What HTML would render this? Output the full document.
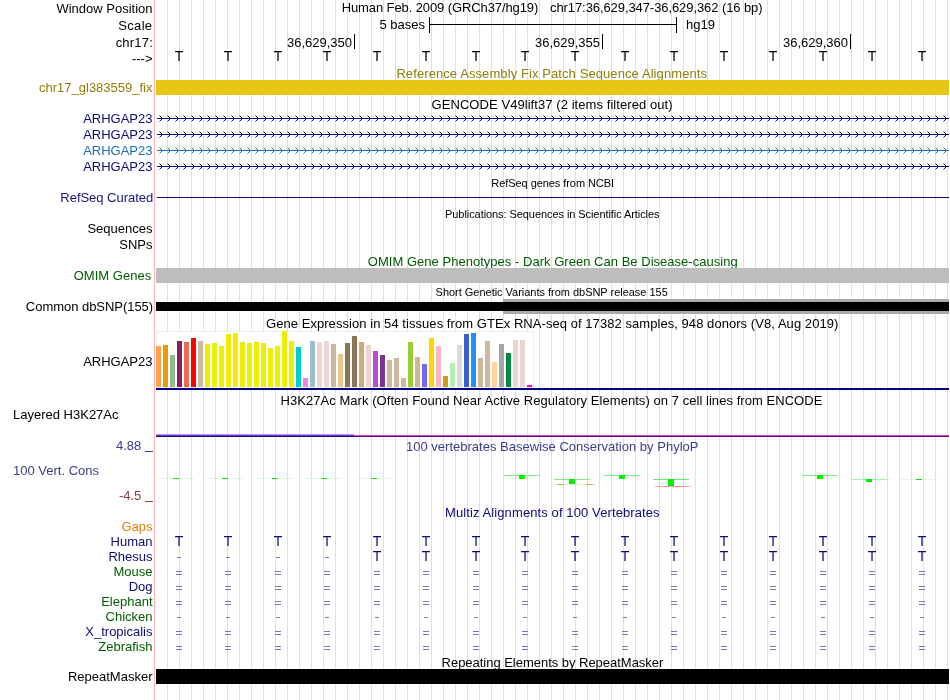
<!DOCTYPE html>
<html><head><meta charset="utf-8"><style>
html,body{margin:0;padding:0;background:#fff;}
svg{display:block;will-change:transform;}
text{font-family:"Liberation Sans", sans-serif;}
</style></head><body>
<svg width="950" height="700" viewBox="0 0 950 700" shape-rendering="crispEdges">
<rect width="950" height="700" fill="#fff"/>
<rect x="167" y="0" width="1" height="700" fill="#dcdcff"/>
<rect x="179" y="0" width="1" height="700" fill="#dcdcff"/>
<rect x="191" y="0" width="1" height="700" fill="#dcdcff"/>
<rect x="203" y="0" width="1" height="700" fill="#dcdcff"/>
<rect x="215" y="0" width="1" height="700" fill="#dcdcff"/>
<rect x="227" y="0" width="1" height="700" fill="#dcdcff"/>
<rect x="239" y="0" width="1" height="700" fill="#dcdcff"/>
<rect x="251" y="0" width="1" height="700" fill="#dcdcff"/>
<rect x="263" y="0" width="1" height="700" fill="#dcdcff"/>
<rect x="275" y="0" width="1" height="700" fill="#dcdcff"/>
<rect x="287" y="0" width="1" height="700" fill="#dcdcff"/>
<rect x="299" y="0" width="1" height="700" fill="#dcdcff"/>
<rect x="311" y="0" width="1" height="700" fill="#dcdcff"/>
<rect x="323" y="0" width="1" height="700" fill="#dcdcff"/>
<rect x="335" y="0" width="1" height="700" fill="#dcdcff"/>
<rect x="347" y="0" width="1" height="700" fill="#dcdcff"/>
<rect x="359" y="0" width="1" height="700" fill="#dcdcff"/>
<rect x="371" y="0" width="1" height="700" fill="#dcdcff"/>
<rect x="383" y="0" width="1" height="700" fill="#dcdcff"/>
<rect x="395" y="0" width="1" height="700" fill="#dcdcff"/>
<rect x="407" y="0" width="1" height="700" fill="#dcdcff"/>
<rect x="419" y="0" width="1" height="700" fill="#dcdcff"/>
<rect x="431" y="0" width="1" height="700" fill="#dcdcff"/>
<rect x="443" y="0" width="1" height="700" fill="#dcdcff"/>
<rect x="455" y="0" width="1" height="700" fill="#dcdcff"/>
<rect x="467" y="0" width="1" height="700" fill="#dcdcff"/>
<rect x="479" y="0" width="1" height="700" fill="#dcdcff"/>
<rect x="491" y="0" width="1" height="700" fill="#dcdcff"/>
<rect x="503" y="0" width="1" height="700" fill="#dcdcff"/>
<rect x="515" y="0" width="1" height="700" fill="#dcdcff"/>
<rect x="527" y="0" width="1" height="700" fill="#dcdcff"/>
<rect x="539" y="0" width="1" height="700" fill="#dcdcff"/>
<rect x="551" y="0" width="1" height="700" fill="#dcdcff"/>
<rect x="563" y="0" width="1" height="700" fill="#dcdcff"/>
<rect x="575" y="0" width="1" height="700" fill="#dcdcff"/>
<rect x="587" y="0" width="1" height="700" fill="#dcdcff"/>
<rect x="599" y="0" width="1" height="700" fill="#dcdcff"/>
<rect x="611" y="0" width="1" height="700" fill="#dcdcff"/>
<rect x="623" y="0" width="1" height="700" fill="#dcdcff"/>
<rect x="635" y="0" width="1" height="700" fill="#dcdcff"/>
<rect x="647" y="0" width="1" height="700" fill="#dcdcff"/>
<rect x="659" y="0" width="1" height="700" fill="#dcdcff"/>
<rect x="671" y="0" width="1" height="700" fill="#dcdcff"/>
<rect x="683" y="0" width="1" height="700" fill="#dcdcff"/>
<rect x="695" y="0" width="1" height="700" fill="#dcdcff"/>
<rect x="707" y="0" width="1" height="700" fill="#dcdcff"/>
<rect x="719" y="0" width="1" height="700" fill="#dcdcff"/>
<rect x="731" y="0" width="1" height="700" fill="#dcdcff"/>
<rect x="743" y="0" width="1" height="700" fill="#dcdcff"/>
<rect x="755" y="0" width="1" height="700" fill="#dcdcff"/>
<rect x="767" y="0" width="1" height="700" fill="#dcdcff"/>
<rect x="779" y="0" width="1" height="700" fill="#dcdcff"/>
<rect x="791" y="0" width="1" height="700" fill="#dcdcff"/>
<rect x="803" y="0" width="1" height="700" fill="#dcdcff"/>
<rect x="815" y="0" width="1" height="700" fill="#dcdcff"/>
<rect x="827" y="0" width="1" height="700" fill="#dcdcff"/>
<rect x="839" y="0" width="1" height="700" fill="#dcdcff"/>
<rect x="851" y="0" width="1" height="700" fill="#dcdcff"/>
<rect x="863" y="0" width="1" height="700" fill="#dcdcff"/>
<rect x="875" y="0" width="1" height="700" fill="#dcdcff"/>
<rect x="887" y="0" width="1" height="700" fill="#dcdcff"/>
<rect x="899" y="0" width="1" height="700" fill="#dcdcff"/>
<rect x="911" y="0" width="1" height="700" fill="#dcdcff"/>
<rect x="923" y="0" width="1" height="700" fill="#dcdcff"/>
<rect x="935" y="0" width="1" height="700" fill="#dcdcff"/>
<rect x="947" y="0" width="1" height="700" fill="#dcdcff"/>
<rect x="154" y="0" width="1" height="700" fill="#ffb4b4"/>
<text x="152.5" y="13" font-size="13" fill="#000" text-anchor="end">Window Position</text>
<text x="118.34" y="30" font-size="13" fill="#000" text-anchor="start" textLength="33.72" lengthAdjust="spacing">Scale</text>
<text x="115.68" y="47" font-size="13" fill="#000" text-anchor="start" textLength="37.13" lengthAdjust="spacing">chr17:</text>
<text x="152.5" y="63" font-size="13" fill="#000" text-anchor="end">---&gt;</text>
<text x="152.5" y="92" font-size="13" fill="#927d08" text-anchor="end">chr17_gl383559_fix</text>
<text x="152.5" y="123" font-size="13" fill="#0c0c78" text-anchor="end">ARHGAP23</text>
<text x="152.5" y="139" font-size="13" fill="#0c0c78" text-anchor="end">ARHGAP23</text>
<text x="152.5" y="155" font-size="13" fill="#1a6fb5" text-anchor="end">ARHGAP23</text>
<text x="152.5" y="171" font-size="13" fill="#0c0c78" text-anchor="end">ARHGAP23</text>
<text x="60.34" y="202" font-size="13" fill="#14147c" text-anchor="start" textLength="92.82" lengthAdjust="spacing">RefSeq Curated</text>
<text x="152.5" y="233" font-size="13" fill="#000" text-anchor="end">Sequences</text>
<text x="152.5" y="249" font-size="13" fill="#000" text-anchor="end">SNPs</text>
<text x="73.7" y="280" font-size="13" fill="#005c00" text-anchor="start" textLength="77.5" lengthAdjust="spacing">OMIM Genes</text>
<text x="25.86" y="311" font-size="13" fill="#000" text-anchor="start" textLength="127.29" lengthAdjust="spacing">Common dbSNP(155)</text>
<text x="152.5" y="366" font-size="13" fill="#000" text-anchor="end">ARHGAP23</text>
<text x="13" y="419" font-size="13" fill="#000" text-anchor="start">Layered H3K27Ac</text>
<text x="141.3" y="450" font-size="13" fill="#3c3c8c" text-anchor="end">4.88</text>
<rect x="145" y="451" width="8" height="1" fill="#3c3c8c"/>
<text x="13" y="475" font-size="13" fill="#3c3c8c" text-anchor="start">100 Vert. Cons</text>
<text x="141.3" y="500" font-size="13" fill="#8c3c3c" text-anchor="end">-4.5</text>
<rect x="145" y="501" width="8" height="1" fill="#8c3c3c"/>
<text x="152.5" y="531" font-size="13" fill="#e27f08" text-anchor="end">Gaps</text>
<text x="152.5" y="546" font-size="13" fill="#0c0c78" text-anchor="end">Human</text>
<text x="152.5" y="561" font-size="13" fill="#0c0c78" text-anchor="end">Rhesus</text>
<text x="152.5" y="576" font-size="13" fill="#005c00" text-anchor="end">Mouse</text>
<text x="152.5" y="591" font-size="13" fill="#0c0c78" text-anchor="end">Dog</text>
<text x="152.5" y="606" font-size="13" fill="#005c00" text-anchor="end">Elephant</text>
<text x="152.5" y="621" font-size="13" fill="#005c00" text-anchor="end">Chicken</text>
<text x="152.5" y="636" font-size="13" fill="#0c0c78" text-anchor="end">X_tropicalis</text>
<text x="152.5" y="651" font-size="13" fill="#005c00" text-anchor="end">Zebrafish</text>
<text x="152.5" y="681" font-size="13" fill="#000" text-anchor="end">RepeatMasker</text>
<text x="341.63" y="12" font-size="13" fill="#000" text-anchor="start" textLength="196.64" lengthAdjust="spacing">Human Feb. 2009 (GRCh37/hg19)</text>
<text x="550.01" y="12" font-size="13" fill="#000" text-anchor="start" textLength="212.59" lengthAdjust="spacing">chr17:36,629,347-36,629,362 (16 bp)</text>
<text x="425" y="29" font-size="13" fill="#000" text-anchor="end">5 bases</text>
<rect x="429" y="17" width="1" height="16" fill="#000"/>
<rect x="676" y="17" width="1" height="16" fill="#000"/>
<rect x="429" y="24" width="248" height="1" fill="#000"/>
<text x="686" y="29" font-size="13" fill="#000" text-anchor="start">hg19</text>
<rect x="354" y="34" width="1" height="15" fill="#000"/>
<text x="352" y="47" font-size="13" fill="#000" text-anchor="end">36,629,350</text>
<rect x="602" y="34" width="1" height="15" fill="#000"/>
<text x="600" y="47" font-size="13" fill="#000" text-anchor="end">36,629,355</text>
<rect x="850" y="34" width="1" height="15" fill="#000"/>
<text x="848" y="47" font-size="13" fill="#000" text-anchor="end">36,629,360</text>
<text x="179.00" y="61" font-size="14" fill="#000" text-anchor="middle">T</text>
<text x="228.00" y="61" font-size="14" fill="#000" text-anchor="middle">T</text>
<text x="278.00" y="61" font-size="14" fill="#000" text-anchor="middle">T</text>
<text x="327.00" y="61" font-size="14" fill="#000" text-anchor="middle">T</text>
<text x="377.00" y="61" font-size="14" fill="#000" text-anchor="middle">T</text>
<text x="426.00" y="61" font-size="14" fill="#000" text-anchor="middle">T</text>
<text x="476.00" y="61" font-size="14" fill="#000" text-anchor="middle">T</text>
<text x="525.00" y="61" font-size="14" fill="#000" text-anchor="middle">T</text>
<text x="575.00" y="61" font-size="14" fill="#000" text-anchor="middle">T</text>
<text x="625.00" y="61" font-size="14" fill="#000" text-anchor="middle">T</text>
<text x="674.00" y="61" font-size="14" fill="#000" text-anchor="middle">T</text>
<text x="724.00" y="61" font-size="14" fill="#000" text-anchor="middle">T</text>
<text x="773.00" y="61" font-size="14" fill="#000" text-anchor="middle">T</text>
<text x="823.00" y="61" font-size="14" fill="#000" text-anchor="middle">T</text>
<text x="872.00" y="61" font-size="14" fill="#000" text-anchor="middle">T</text>
<text x="922.00" y="61" font-size="14" fill="#000" text-anchor="middle">T</text>
<text x="396.39" y="78" font-size="13" fill="#927d08" text-anchor="start" textLength="310.62" lengthAdjust="spacing">Reference Assembly Fix Patch Sequence Alignments</text>
<rect x="156" y="80" width="793" height="15" fill="#e6c814"/>
<text x="431.54" y="109" font-size="13" fill="#000" text-anchor="start" textLength="241.02" lengthAdjust="spacing">GENCODE V49lift37 (2 items filtered out)</text>
<rect x="157" y="118" width="792" height="1" fill="#0c0c78"/>
<path d="M160,116h1v1h-1z M161,117h1v3h-1z M160,120h1v1h-1z M168,116h1v1h-1z M169,117h1v3h-1z M168,120h1v1h-1z M176,116h1v1h-1z M177,117h1v3h-1z M176,120h1v1h-1z M184,116h1v1h-1z M185,117h1v3h-1z M184,120h1v1h-1z M192,116h1v1h-1z M193,117h1v3h-1z M192,120h1v1h-1z M200,116h1v1h-1z M201,117h1v3h-1z M200,120h1v1h-1z M208,116h1v1h-1z M209,117h1v3h-1z M208,120h1v1h-1z M216,116h1v1h-1z M217,117h1v3h-1z M216,120h1v1h-1z M224,116h1v1h-1z M225,117h1v3h-1z M224,120h1v1h-1z M232,116h1v1h-1z M233,117h1v3h-1z M232,120h1v1h-1z M240,116h1v1h-1z M241,117h1v3h-1z M240,120h1v1h-1z M248,116h1v1h-1z M249,117h1v3h-1z M248,120h1v1h-1z M256,116h1v1h-1z M257,117h1v3h-1z M256,120h1v1h-1z M264,116h1v1h-1z M265,117h1v3h-1z M264,120h1v1h-1z M272,116h1v1h-1z M273,117h1v3h-1z M272,120h1v1h-1z M280,116h1v1h-1z M281,117h1v3h-1z M280,120h1v1h-1z M288,116h1v1h-1z M289,117h1v3h-1z M288,120h1v1h-1z M296,116h1v1h-1z M297,117h1v3h-1z M296,120h1v1h-1z M304,116h1v1h-1z M305,117h1v3h-1z M304,120h1v1h-1z M312,116h1v1h-1z M313,117h1v3h-1z M312,120h1v1h-1z M320,116h1v1h-1z M321,117h1v3h-1z M320,120h1v1h-1z M328,116h1v1h-1z M329,117h1v3h-1z M328,120h1v1h-1z M336,116h1v1h-1z M337,117h1v3h-1z M336,120h1v1h-1z M344,116h1v1h-1z M345,117h1v3h-1z M344,120h1v1h-1z M352,116h1v1h-1z M353,117h1v3h-1z M352,120h1v1h-1z M360,116h1v1h-1z M361,117h1v3h-1z M360,120h1v1h-1z M368,116h1v1h-1z M369,117h1v3h-1z M368,120h1v1h-1z M376,116h1v1h-1z M377,117h1v3h-1z M376,120h1v1h-1z M384,116h1v1h-1z M385,117h1v3h-1z M384,120h1v1h-1z M392,116h1v1h-1z M393,117h1v3h-1z M392,120h1v1h-1z M400,116h1v1h-1z M401,117h1v3h-1z M400,120h1v1h-1z M408,116h1v1h-1z M409,117h1v3h-1z M408,120h1v1h-1z M416,116h1v1h-1z M417,117h1v3h-1z M416,120h1v1h-1z M424,116h1v1h-1z M425,117h1v3h-1z M424,120h1v1h-1z M432,116h1v1h-1z M433,117h1v3h-1z M432,120h1v1h-1z M440,116h1v1h-1z M441,117h1v3h-1z M440,120h1v1h-1z M448,116h1v1h-1z M449,117h1v3h-1z M448,120h1v1h-1z M456,116h1v1h-1z M457,117h1v3h-1z M456,120h1v1h-1z M464,116h1v1h-1z M465,117h1v3h-1z M464,120h1v1h-1z M472,116h1v1h-1z M473,117h1v3h-1z M472,120h1v1h-1z M480,116h1v1h-1z M481,117h1v3h-1z M480,120h1v1h-1z M488,116h1v1h-1z M489,117h1v3h-1z M488,120h1v1h-1z M496,116h1v1h-1z M497,117h1v3h-1z M496,120h1v1h-1z M504,116h1v1h-1z M505,117h1v3h-1z M504,120h1v1h-1z M512,116h1v1h-1z M513,117h1v3h-1z M512,120h1v1h-1z M520,116h1v1h-1z M521,117h1v3h-1z M520,120h1v1h-1z M528,116h1v1h-1z M529,117h1v3h-1z M528,120h1v1h-1z M536,116h1v1h-1z M537,117h1v3h-1z M536,120h1v1h-1z M544,116h1v1h-1z M545,117h1v3h-1z M544,120h1v1h-1z M552,116h1v1h-1z M553,117h1v3h-1z M552,120h1v1h-1z M560,116h1v1h-1z M561,117h1v3h-1z M560,120h1v1h-1z M568,116h1v1h-1z M569,117h1v3h-1z M568,120h1v1h-1z M576,116h1v1h-1z M577,117h1v3h-1z M576,120h1v1h-1z M584,116h1v1h-1z M585,117h1v3h-1z M584,120h1v1h-1z M592,116h1v1h-1z M593,117h1v3h-1z M592,120h1v1h-1z M600,116h1v1h-1z M601,117h1v3h-1z M600,120h1v1h-1z M608,116h1v1h-1z M609,117h1v3h-1z M608,120h1v1h-1z M616,116h1v1h-1z M617,117h1v3h-1z M616,120h1v1h-1z M624,116h1v1h-1z M625,117h1v3h-1z M624,120h1v1h-1z M632,116h1v1h-1z M633,117h1v3h-1z M632,120h1v1h-1z M640,116h1v1h-1z M641,117h1v3h-1z M640,120h1v1h-1z M648,116h1v1h-1z M649,117h1v3h-1z M648,120h1v1h-1z M656,116h1v1h-1z M657,117h1v3h-1z M656,120h1v1h-1z M664,116h1v1h-1z M665,117h1v3h-1z M664,120h1v1h-1z M672,116h1v1h-1z M673,117h1v3h-1z M672,120h1v1h-1z M680,116h1v1h-1z M681,117h1v3h-1z M680,120h1v1h-1z M688,116h1v1h-1z M689,117h1v3h-1z M688,120h1v1h-1z M696,116h1v1h-1z M697,117h1v3h-1z M696,120h1v1h-1z M704,116h1v1h-1z M705,117h1v3h-1z M704,120h1v1h-1z M712,116h1v1h-1z M713,117h1v3h-1z M712,120h1v1h-1z M720,116h1v1h-1z M721,117h1v3h-1z M720,120h1v1h-1z M728,116h1v1h-1z M729,117h1v3h-1z M728,120h1v1h-1z M736,116h1v1h-1z M737,117h1v3h-1z M736,120h1v1h-1z M744,116h1v1h-1z M745,117h1v3h-1z M744,120h1v1h-1z M752,116h1v1h-1z M753,117h1v3h-1z M752,120h1v1h-1z M760,116h1v1h-1z M761,117h1v3h-1z M760,120h1v1h-1z M768,116h1v1h-1z M769,117h1v3h-1z M768,120h1v1h-1z M776,116h1v1h-1z M777,117h1v3h-1z M776,120h1v1h-1z M784,116h1v1h-1z M785,117h1v3h-1z M784,120h1v1h-1z M792,116h1v1h-1z M793,117h1v3h-1z M792,120h1v1h-1z M800,116h1v1h-1z M801,117h1v3h-1z M800,120h1v1h-1z M808,116h1v1h-1z M809,117h1v3h-1z M808,120h1v1h-1z M816,116h1v1h-1z M817,117h1v3h-1z M816,120h1v1h-1z M824,116h1v1h-1z M825,117h1v3h-1z M824,120h1v1h-1z M832,116h1v1h-1z M833,117h1v3h-1z M832,120h1v1h-1z M840,116h1v1h-1z M841,117h1v3h-1z M840,120h1v1h-1z M848,116h1v1h-1z M849,117h1v3h-1z M848,120h1v1h-1z M856,116h1v1h-1z M857,117h1v3h-1z M856,120h1v1h-1z M864,116h1v1h-1z M865,117h1v3h-1z M864,120h1v1h-1z M872,116h1v1h-1z M873,117h1v3h-1z M872,120h1v1h-1z M880,116h1v1h-1z M881,117h1v3h-1z M880,120h1v1h-1z M888,116h1v1h-1z M889,117h1v3h-1z M888,120h1v1h-1z M896,116h1v1h-1z M897,117h1v3h-1z M896,120h1v1h-1z M904,116h1v1h-1z M905,117h1v3h-1z M904,120h1v1h-1z M912,116h1v1h-1z M913,117h1v3h-1z M912,120h1v1h-1z M920,116h1v1h-1z M921,117h1v3h-1z M920,120h1v1h-1z M928,116h1v1h-1z M929,117h1v3h-1z M928,120h1v1h-1z M936,116h1v1h-1z M937,117h1v3h-1z M936,120h1v1h-1z M944,116h1v1h-1z M945,117h1v3h-1z M944,120h1v1h-1z" fill="#0c0c78"/>
<path d="M159,115h1v1h-1z M159,121h1v1h-1z M167,115h1v1h-1z M167,121h1v1h-1z M175,115h1v1h-1z M175,121h1v1h-1z M183,115h1v1h-1z M183,121h1v1h-1z M191,115h1v1h-1z M191,121h1v1h-1z M199,115h1v1h-1z M199,121h1v1h-1z M207,115h1v1h-1z M207,121h1v1h-1z M215,115h1v1h-1z M215,121h1v1h-1z M223,115h1v1h-1z M223,121h1v1h-1z M231,115h1v1h-1z M231,121h1v1h-1z M239,115h1v1h-1z M239,121h1v1h-1z M247,115h1v1h-1z M247,121h1v1h-1z M255,115h1v1h-1z M255,121h1v1h-1z M263,115h1v1h-1z M263,121h1v1h-1z M271,115h1v1h-1z M271,121h1v1h-1z M279,115h1v1h-1z M279,121h1v1h-1z M287,115h1v1h-1z M287,121h1v1h-1z M295,115h1v1h-1z M295,121h1v1h-1z M303,115h1v1h-1z M303,121h1v1h-1z M311,115h1v1h-1z M311,121h1v1h-1z M319,115h1v1h-1z M319,121h1v1h-1z M327,115h1v1h-1z M327,121h1v1h-1z M335,115h1v1h-1z M335,121h1v1h-1z M343,115h1v1h-1z M343,121h1v1h-1z M351,115h1v1h-1z M351,121h1v1h-1z M359,115h1v1h-1z M359,121h1v1h-1z M367,115h1v1h-1z M367,121h1v1h-1z M375,115h1v1h-1z M375,121h1v1h-1z M383,115h1v1h-1z M383,121h1v1h-1z M391,115h1v1h-1z M391,121h1v1h-1z M399,115h1v1h-1z M399,121h1v1h-1z M407,115h1v1h-1z M407,121h1v1h-1z M415,115h1v1h-1z M415,121h1v1h-1z M423,115h1v1h-1z M423,121h1v1h-1z M431,115h1v1h-1z M431,121h1v1h-1z M439,115h1v1h-1z M439,121h1v1h-1z M447,115h1v1h-1z M447,121h1v1h-1z M455,115h1v1h-1z M455,121h1v1h-1z M463,115h1v1h-1z M463,121h1v1h-1z M471,115h1v1h-1z M471,121h1v1h-1z M479,115h1v1h-1z M479,121h1v1h-1z M487,115h1v1h-1z M487,121h1v1h-1z M495,115h1v1h-1z M495,121h1v1h-1z M503,115h1v1h-1z M503,121h1v1h-1z M511,115h1v1h-1z M511,121h1v1h-1z M519,115h1v1h-1z M519,121h1v1h-1z M527,115h1v1h-1z M527,121h1v1h-1z M535,115h1v1h-1z M535,121h1v1h-1z M543,115h1v1h-1z M543,121h1v1h-1z M551,115h1v1h-1z M551,121h1v1h-1z M559,115h1v1h-1z M559,121h1v1h-1z M567,115h1v1h-1z M567,121h1v1h-1z M575,115h1v1h-1z M575,121h1v1h-1z M583,115h1v1h-1z M583,121h1v1h-1z M591,115h1v1h-1z M591,121h1v1h-1z M599,115h1v1h-1z M599,121h1v1h-1z M607,115h1v1h-1z M607,121h1v1h-1z M615,115h1v1h-1z M615,121h1v1h-1z M623,115h1v1h-1z M623,121h1v1h-1z M631,115h1v1h-1z M631,121h1v1h-1z M639,115h1v1h-1z M639,121h1v1h-1z M647,115h1v1h-1z M647,121h1v1h-1z M655,115h1v1h-1z M655,121h1v1h-1z M663,115h1v1h-1z M663,121h1v1h-1z M671,115h1v1h-1z M671,121h1v1h-1z M679,115h1v1h-1z M679,121h1v1h-1z M687,115h1v1h-1z M687,121h1v1h-1z M695,115h1v1h-1z M695,121h1v1h-1z M703,115h1v1h-1z M703,121h1v1h-1z M711,115h1v1h-1z M711,121h1v1h-1z M719,115h1v1h-1z M719,121h1v1h-1z M727,115h1v1h-1z M727,121h1v1h-1z M735,115h1v1h-1z M735,121h1v1h-1z M743,115h1v1h-1z M743,121h1v1h-1z M751,115h1v1h-1z M751,121h1v1h-1z M759,115h1v1h-1z M759,121h1v1h-1z M767,115h1v1h-1z M767,121h1v1h-1z M775,115h1v1h-1z M775,121h1v1h-1z M783,115h1v1h-1z M783,121h1v1h-1z M791,115h1v1h-1z M791,121h1v1h-1z M799,115h1v1h-1z M799,121h1v1h-1z M807,115h1v1h-1z M807,121h1v1h-1z M815,115h1v1h-1z M815,121h1v1h-1z M823,115h1v1h-1z M823,121h1v1h-1z M831,115h1v1h-1z M831,121h1v1h-1z M839,115h1v1h-1z M839,121h1v1h-1z M847,115h1v1h-1z M847,121h1v1h-1z M855,115h1v1h-1z M855,121h1v1h-1z M863,115h1v1h-1z M863,121h1v1h-1z M871,115h1v1h-1z M871,121h1v1h-1z M879,115h1v1h-1z M879,121h1v1h-1z M887,115h1v1h-1z M887,121h1v1h-1z M895,115h1v1h-1z M895,121h1v1h-1z M903,115h1v1h-1z M903,121h1v1h-1z M911,115h1v1h-1z M911,121h1v1h-1z M919,115h1v1h-1z M919,121h1v1h-1z M927,115h1v1h-1z M927,121h1v1h-1z M935,115h1v1h-1z M935,121h1v1h-1z M943,115h1v1h-1z M943,121h1v1h-1z" fill="#9292c2"/>
<rect x="157" y="134" width="792" height="1" fill="#0c0c78"/>
<path d="M160,132h1v1h-1z M161,133h1v3h-1z M160,136h1v1h-1z M168,132h1v1h-1z M169,133h1v3h-1z M168,136h1v1h-1z M176,132h1v1h-1z M177,133h1v3h-1z M176,136h1v1h-1z M184,132h1v1h-1z M185,133h1v3h-1z M184,136h1v1h-1z M192,132h1v1h-1z M193,133h1v3h-1z M192,136h1v1h-1z M200,132h1v1h-1z M201,133h1v3h-1z M200,136h1v1h-1z M208,132h1v1h-1z M209,133h1v3h-1z M208,136h1v1h-1z M216,132h1v1h-1z M217,133h1v3h-1z M216,136h1v1h-1z M224,132h1v1h-1z M225,133h1v3h-1z M224,136h1v1h-1z M232,132h1v1h-1z M233,133h1v3h-1z M232,136h1v1h-1z M240,132h1v1h-1z M241,133h1v3h-1z M240,136h1v1h-1z M248,132h1v1h-1z M249,133h1v3h-1z M248,136h1v1h-1z M256,132h1v1h-1z M257,133h1v3h-1z M256,136h1v1h-1z M264,132h1v1h-1z M265,133h1v3h-1z M264,136h1v1h-1z M272,132h1v1h-1z M273,133h1v3h-1z M272,136h1v1h-1z M280,132h1v1h-1z M281,133h1v3h-1z M280,136h1v1h-1z M288,132h1v1h-1z M289,133h1v3h-1z M288,136h1v1h-1z M296,132h1v1h-1z M297,133h1v3h-1z M296,136h1v1h-1z M304,132h1v1h-1z M305,133h1v3h-1z M304,136h1v1h-1z M312,132h1v1h-1z M313,133h1v3h-1z M312,136h1v1h-1z M320,132h1v1h-1z M321,133h1v3h-1z M320,136h1v1h-1z M328,132h1v1h-1z M329,133h1v3h-1z M328,136h1v1h-1z M336,132h1v1h-1z M337,133h1v3h-1z M336,136h1v1h-1z M344,132h1v1h-1z M345,133h1v3h-1z M344,136h1v1h-1z M352,132h1v1h-1z M353,133h1v3h-1z M352,136h1v1h-1z M360,132h1v1h-1z M361,133h1v3h-1z M360,136h1v1h-1z M368,132h1v1h-1z M369,133h1v3h-1z M368,136h1v1h-1z M376,132h1v1h-1z M377,133h1v3h-1z M376,136h1v1h-1z M384,132h1v1h-1z M385,133h1v3h-1z M384,136h1v1h-1z M392,132h1v1h-1z M393,133h1v3h-1z M392,136h1v1h-1z M400,132h1v1h-1z M401,133h1v3h-1z M400,136h1v1h-1z M408,132h1v1h-1z M409,133h1v3h-1z M408,136h1v1h-1z M416,132h1v1h-1z M417,133h1v3h-1z M416,136h1v1h-1z M424,132h1v1h-1z M425,133h1v3h-1z M424,136h1v1h-1z M432,132h1v1h-1z M433,133h1v3h-1z M432,136h1v1h-1z M440,132h1v1h-1z M441,133h1v3h-1z M440,136h1v1h-1z M448,132h1v1h-1z M449,133h1v3h-1z M448,136h1v1h-1z M456,132h1v1h-1z M457,133h1v3h-1z M456,136h1v1h-1z M464,132h1v1h-1z M465,133h1v3h-1z M464,136h1v1h-1z M472,132h1v1h-1z M473,133h1v3h-1z M472,136h1v1h-1z M480,132h1v1h-1z M481,133h1v3h-1z M480,136h1v1h-1z M488,132h1v1h-1z M489,133h1v3h-1z M488,136h1v1h-1z M496,132h1v1h-1z M497,133h1v3h-1z M496,136h1v1h-1z M504,132h1v1h-1z M505,133h1v3h-1z M504,136h1v1h-1z M512,132h1v1h-1z M513,133h1v3h-1z M512,136h1v1h-1z M520,132h1v1h-1z M521,133h1v3h-1z M520,136h1v1h-1z M528,132h1v1h-1z M529,133h1v3h-1z M528,136h1v1h-1z M536,132h1v1h-1z M537,133h1v3h-1z M536,136h1v1h-1z M544,132h1v1h-1z M545,133h1v3h-1z M544,136h1v1h-1z M552,132h1v1h-1z M553,133h1v3h-1z M552,136h1v1h-1z M560,132h1v1h-1z M561,133h1v3h-1z M560,136h1v1h-1z M568,132h1v1h-1z M569,133h1v3h-1z M568,136h1v1h-1z M576,132h1v1h-1z M577,133h1v3h-1z M576,136h1v1h-1z M584,132h1v1h-1z M585,133h1v3h-1z M584,136h1v1h-1z M592,132h1v1h-1z M593,133h1v3h-1z M592,136h1v1h-1z M600,132h1v1h-1z M601,133h1v3h-1z M600,136h1v1h-1z M608,132h1v1h-1z M609,133h1v3h-1z M608,136h1v1h-1z M616,132h1v1h-1z M617,133h1v3h-1z M616,136h1v1h-1z M624,132h1v1h-1z M625,133h1v3h-1z M624,136h1v1h-1z M632,132h1v1h-1z M633,133h1v3h-1z M632,136h1v1h-1z M640,132h1v1h-1z M641,133h1v3h-1z M640,136h1v1h-1z M648,132h1v1h-1z M649,133h1v3h-1z M648,136h1v1h-1z M656,132h1v1h-1z M657,133h1v3h-1z M656,136h1v1h-1z M664,132h1v1h-1z M665,133h1v3h-1z M664,136h1v1h-1z M672,132h1v1h-1z M673,133h1v3h-1z M672,136h1v1h-1z M680,132h1v1h-1z M681,133h1v3h-1z M680,136h1v1h-1z M688,132h1v1h-1z M689,133h1v3h-1z M688,136h1v1h-1z M696,132h1v1h-1z M697,133h1v3h-1z M696,136h1v1h-1z M704,132h1v1h-1z M705,133h1v3h-1z M704,136h1v1h-1z M712,132h1v1h-1z M713,133h1v3h-1z M712,136h1v1h-1z M720,132h1v1h-1z M721,133h1v3h-1z M720,136h1v1h-1z M728,132h1v1h-1z M729,133h1v3h-1z M728,136h1v1h-1z M736,132h1v1h-1z M737,133h1v3h-1z M736,136h1v1h-1z M744,132h1v1h-1z M745,133h1v3h-1z M744,136h1v1h-1z M752,132h1v1h-1z M753,133h1v3h-1z M752,136h1v1h-1z M760,132h1v1h-1z M761,133h1v3h-1z M760,136h1v1h-1z M768,132h1v1h-1z M769,133h1v3h-1z M768,136h1v1h-1z M776,132h1v1h-1z M777,133h1v3h-1z M776,136h1v1h-1z M784,132h1v1h-1z M785,133h1v3h-1z M784,136h1v1h-1z M792,132h1v1h-1z M793,133h1v3h-1z M792,136h1v1h-1z M800,132h1v1h-1z M801,133h1v3h-1z M800,136h1v1h-1z M808,132h1v1h-1z M809,133h1v3h-1z M808,136h1v1h-1z M816,132h1v1h-1z M817,133h1v3h-1z M816,136h1v1h-1z M824,132h1v1h-1z M825,133h1v3h-1z M824,136h1v1h-1z M832,132h1v1h-1z M833,133h1v3h-1z M832,136h1v1h-1z M840,132h1v1h-1z M841,133h1v3h-1z M840,136h1v1h-1z M848,132h1v1h-1z M849,133h1v3h-1z M848,136h1v1h-1z M856,132h1v1h-1z M857,133h1v3h-1z M856,136h1v1h-1z M864,132h1v1h-1z M865,133h1v3h-1z M864,136h1v1h-1z M872,132h1v1h-1z M873,133h1v3h-1z M872,136h1v1h-1z M880,132h1v1h-1z M881,133h1v3h-1z M880,136h1v1h-1z M888,132h1v1h-1z M889,133h1v3h-1z M888,136h1v1h-1z M896,132h1v1h-1z M897,133h1v3h-1z M896,136h1v1h-1z M904,132h1v1h-1z M905,133h1v3h-1z M904,136h1v1h-1z M912,132h1v1h-1z M913,133h1v3h-1z M912,136h1v1h-1z M920,132h1v1h-1z M921,133h1v3h-1z M920,136h1v1h-1z M928,132h1v1h-1z M929,133h1v3h-1z M928,136h1v1h-1z M936,132h1v1h-1z M937,133h1v3h-1z M936,136h1v1h-1z M944,132h1v1h-1z M945,133h1v3h-1z M944,136h1v1h-1z" fill="#0c0c78"/>
<path d="M159,131h1v1h-1z M159,137h1v1h-1z M167,131h1v1h-1z M167,137h1v1h-1z M175,131h1v1h-1z M175,137h1v1h-1z M183,131h1v1h-1z M183,137h1v1h-1z M191,131h1v1h-1z M191,137h1v1h-1z M199,131h1v1h-1z M199,137h1v1h-1z M207,131h1v1h-1z M207,137h1v1h-1z M215,131h1v1h-1z M215,137h1v1h-1z M223,131h1v1h-1z M223,137h1v1h-1z M231,131h1v1h-1z M231,137h1v1h-1z M239,131h1v1h-1z M239,137h1v1h-1z M247,131h1v1h-1z M247,137h1v1h-1z M255,131h1v1h-1z M255,137h1v1h-1z M263,131h1v1h-1z M263,137h1v1h-1z M271,131h1v1h-1z M271,137h1v1h-1z M279,131h1v1h-1z M279,137h1v1h-1z M287,131h1v1h-1z M287,137h1v1h-1z M295,131h1v1h-1z M295,137h1v1h-1z M303,131h1v1h-1z M303,137h1v1h-1z M311,131h1v1h-1z M311,137h1v1h-1z M319,131h1v1h-1z M319,137h1v1h-1z M327,131h1v1h-1z M327,137h1v1h-1z M335,131h1v1h-1z M335,137h1v1h-1z M343,131h1v1h-1z M343,137h1v1h-1z M351,131h1v1h-1z M351,137h1v1h-1z M359,131h1v1h-1z M359,137h1v1h-1z M367,131h1v1h-1z M367,137h1v1h-1z M375,131h1v1h-1z M375,137h1v1h-1z M383,131h1v1h-1z M383,137h1v1h-1z M391,131h1v1h-1z M391,137h1v1h-1z M399,131h1v1h-1z M399,137h1v1h-1z M407,131h1v1h-1z M407,137h1v1h-1z M415,131h1v1h-1z M415,137h1v1h-1z M423,131h1v1h-1z M423,137h1v1h-1z M431,131h1v1h-1z M431,137h1v1h-1z M439,131h1v1h-1z M439,137h1v1h-1z M447,131h1v1h-1z M447,137h1v1h-1z M455,131h1v1h-1z M455,137h1v1h-1z M463,131h1v1h-1z M463,137h1v1h-1z M471,131h1v1h-1z M471,137h1v1h-1z M479,131h1v1h-1z M479,137h1v1h-1z M487,131h1v1h-1z M487,137h1v1h-1z M495,131h1v1h-1z M495,137h1v1h-1z M503,131h1v1h-1z M503,137h1v1h-1z M511,131h1v1h-1z M511,137h1v1h-1z M519,131h1v1h-1z M519,137h1v1h-1z M527,131h1v1h-1z M527,137h1v1h-1z M535,131h1v1h-1z M535,137h1v1h-1z M543,131h1v1h-1z M543,137h1v1h-1z M551,131h1v1h-1z M551,137h1v1h-1z M559,131h1v1h-1z M559,137h1v1h-1z M567,131h1v1h-1z M567,137h1v1h-1z M575,131h1v1h-1z M575,137h1v1h-1z M583,131h1v1h-1z M583,137h1v1h-1z M591,131h1v1h-1z M591,137h1v1h-1z M599,131h1v1h-1z M599,137h1v1h-1z M607,131h1v1h-1z M607,137h1v1h-1z M615,131h1v1h-1z M615,137h1v1h-1z M623,131h1v1h-1z M623,137h1v1h-1z M631,131h1v1h-1z M631,137h1v1h-1z M639,131h1v1h-1z M639,137h1v1h-1z M647,131h1v1h-1z M647,137h1v1h-1z M655,131h1v1h-1z M655,137h1v1h-1z M663,131h1v1h-1z M663,137h1v1h-1z M671,131h1v1h-1z M671,137h1v1h-1z M679,131h1v1h-1z M679,137h1v1h-1z M687,131h1v1h-1z M687,137h1v1h-1z M695,131h1v1h-1z M695,137h1v1h-1z M703,131h1v1h-1z M703,137h1v1h-1z M711,131h1v1h-1z M711,137h1v1h-1z M719,131h1v1h-1z M719,137h1v1h-1z M727,131h1v1h-1z M727,137h1v1h-1z M735,131h1v1h-1z M735,137h1v1h-1z M743,131h1v1h-1z M743,137h1v1h-1z M751,131h1v1h-1z M751,137h1v1h-1z M759,131h1v1h-1z M759,137h1v1h-1z M767,131h1v1h-1z M767,137h1v1h-1z M775,131h1v1h-1z M775,137h1v1h-1z M783,131h1v1h-1z M783,137h1v1h-1z M791,131h1v1h-1z M791,137h1v1h-1z M799,131h1v1h-1z M799,137h1v1h-1z M807,131h1v1h-1z M807,137h1v1h-1z M815,131h1v1h-1z M815,137h1v1h-1z M823,131h1v1h-1z M823,137h1v1h-1z M831,131h1v1h-1z M831,137h1v1h-1z M839,131h1v1h-1z M839,137h1v1h-1z M847,131h1v1h-1z M847,137h1v1h-1z M855,131h1v1h-1z M855,137h1v1h-1z M863,131h1v1h-1z M863,137h1v1h-1z M871,131h1v1h-1z M871,137h1v1h-1z M879,131h1v1h-1z M879,137h1v1h-1z M887,131h1v1h-1z M887,137h1v1h-1z M895,131h1v1h-1z M895,137h1v1h-1z M903,131h1v1h-1z M903,137h1v1h-1z M911,131h1v1h-1z M911,137h1v1h-1z M919,131h1v1h-1z M919,137h1v1h-1z M927,131h1v1h-1z M927,137h1v1h-1z M935,131h1v1h-1z M935,137h1v1h-1z M943,131h1v1h-1z M943,137h1v1h-1z" fill="#9292c2"/>
<rect x="157" y="150" width="792" height="1" fill="#1a6fb5"/>
<path d="M160,148h1v1h-1z M161,149h1v3h-1z M160,152h1v1h-1z M168,148h1v1h-1z M169,149h1v3h-1z M168,152h1v1h-1z M176,148h1v1h-1z M177,149h1v3h-1z M176,152h1v1h-1z M184,148h1v1h-1z M185,149h1v3h-1z M184,152h1v1h-1z M192,148h1v1h-1z M193,149h1v3h-1z M192,152h1v1h-1z M200,148h1v1h-1z M201,149h1v3h-1z M200,152h1v1h-1z M208,148h1v1h-1z M209,149h1v3h-1z M208,152h1v1h-1z M216,148h1v1h-1z M217,149h1v3h-1z M216,152h1v1h-1z M224,148h1v1h-1z M225,149h1v3h-1z M224,152h1v1h-1z M232,148h1v1h-1z M233,149h1v3h-1z M232,152h1v1h-1z M240,148h1v1h-1z M241,149h1v3h-1z M240,152h1v1h-1z M248,148h1v1h-1z M249,149h1v3h-1z M248,152h1v1h-1z M256,148h1v1h-1z M257,149h1v3h-1z M256,152h1v1h-1z M264,148h1v1h-1z M265,149h1v3h-1z M264,152h1v1h-1z M272,148h1v1h-1z M273,149h1v3h-1z M272,152h1v1h-1z M280,148h1v1h-1z M281,149h1v3h-1z M280,152h1v1h-1z M288,148h1v1h-1z M289,149h1v3h-1z M288,152h1v1h-1z M296,148h1v1h-1z M297,149h1v3h-1z M296,152h1v1h-1z M304,148h1v1h-1z M305,149h1v3h-1z M304,152h1v1h-1z M312,148h1v1h-1z M313,149h1v3h-1z M312,152h1v1h-1z M320,148h1v1h-1z M321,149h1v3h-1z M320,152h1v1h-1z M328,148h1v1h-1z M329,149h1v3h-1z M328,152h1v1h-1z M336,148h1v1h-1z M337,149h1v3h-1z M336,152h1v1h-1z M344,148h1v1h-1z M345,149h1v3h-1z M344,152h1v1h-1z M352,148h1v1h-1z M353,149h1v3h-1z M352,152h1v1h-1z M360,148h1v1h-1z M361,149h1v3h-1z M360,152h1v1h-1z M368,148h1v1h-1z M369,149h1v3h-1z M368,152h1v1h-1z M376,148h1v1h-1z M377,149h1v3h-1z M376,152h1v1h-1z M384,148h1v1h-1z M385,149h1v3h-1z M384,152h1v1h-1z M392,148h1v1h-1z M393,149h1v3h-1z M392,152h1v1h-1z M400,148h1v1h-1z M401,149h1v3h-1z M400,152h1v1h-1z M408,148h1v1h-1z M409,149h1v3h-1z M408,152h1v1h-1z M416,148h1v1h-1z M417,149h1v3h-1z M416,152h1v1h-1z M424,148h1v1h-1z M425,149h1v3h-1z M424,152h1v1h-1z M432,148h1v1h-1z M433,149h1v3h-1z M432,152h1v1h-1z M440,148h1v1h-1z M441,149h1v3h-1z M440,152h1v1h-1z M448,148h1v1h-1z M449,149h1v3h-1z M448,152h1v1h-1z M456,148h1v1h-1z M457,149h1v3h-1z M456,152h1v1h-1z M464,148h1v1h-1z M465,149h1v3h-1z M464,152h1v1h-1z M472,148h1v1h-1z M473,149h1v3h-1z M472,152h1v1h-1z M480,148h1v1h-1z M481,149h1v3h-1z M480,152h1v1h-1z M488,148h1v1h-1z M489,149h1v3h-1z M488,152h1v1h-1z M496,148h1v1h-1z M497,149h1v3h-1z M496,152h1v1h-1z M504,148h1v1h-1z M505,149h1v3h-1z M504,152h1v1h-1z M512,148h1v1h-1z M513,149h1v3h-1z M512,152h1v1h-1z M520,148h1v1h-1z M521,149h1v3h-1z M520,152h1v1h-1z M528,148h1v1h-1z M529,149h1v3h-1z M528,152h1v1h-1z M536,148h1v1h-1z M537,149h1v3h-1z M536,152h1v1h-1z M544,148h1v1h-1z M545,149h1v3h-1z M544,152h1v1h-1z M552,148h1v1h-1z M553,149h1v3h-1z M552,152h1v1h-1z M560,148h1v1h-1z M561,149h1v3h-1z M560,152h1v1h-1z M568,148h1v1h-1z M569,149h1v3h-1z M568,152h1v1h-1z M576,148h1v1h-1z M577,149h1v3h-1z M576,152h1v1h-1z M584,148h1v1h-1z M585,149h1v3h-1z M584,152h1v1h-1z M592,148h1v1h-1z M593,149h1v3h-1z M592,152h1v1h-1z M600,148h1v1h-1z M601,149h1v3h-1z M600,152h1v1h-1z M608,148h1v1h-1z M609,149h1v3h-1z M608,152h1v1h-1z M616,148h1v1h-1z M617,149h1v3h-1z M616,152h1v1h-1z M624,148h1v1h-1z M625,149h1v3h-1z M624,152h1v1h-1z M632,148h1v1h-1z M633,149h1v3h-1z M632,152h1v1h-1z M640,148h1v1h-1z M641,149h1v3h-1z M640,152h1v1h-1z M648,148h1v1h-1z M649,149h1v3h-1z M648,152h1v1h-1z M656,148h1v1h-1z M657,149h1v3h-1z M656,152h1v1h-1z M664,148h1v1h-1z M665,149h1v3h-1z M664,152h1v1h-1z M672,148h1v1h-1z M673,149h1v3h-1z M672,152h1v1h-1z M680,148h1v1h-1z M681,149h1v3h-1z M680,152h1v1h-1z M688,148h1v1h-1z M689,149h1v3h-1z M688,152h1v1h-1z M696,148h1v1h-1z M697,149h1v3h-1z M696,152h1v1h-1z M704,148h1v1h-1z M705,149h1v3h-1z M704,152h1v1h-1z M712,148h1v1h-1z M713,149h1v3h-1z M712,152h1v1h-1z M720,148h1v1h-1z M721,149h1v3h-1z M720,152h1v1h-1z M728,148h1v1h-1z M729,149h1v3h-1z M728,152h1v1h-1z M736,148h1v1h-1z M737,149h1v3h-1z M736,152h1v1h-1z M744,148h1v1h-1z M745,149h1v3h-1z M744,152h1v1h-1z M752,148h1v1h-1z M753,149h1v3h-1z M752,152h1v1h-1z M760,148h1v1h-1z M761,149h1v3h-1z M760,152h1v1h-1z M768,148h1v1h-1z M769,149h1v3h-1z M768,152h1v1h-1z M776,148h1v1h-1z M777,149h1v3h-1z M776,152h1v1h-1z M784,148h1v1h-1z M785,149h1v3h-1z M784,152h1v1h-1z M792,148h1v1h-1z M793,149h1v3h-1z M792,152h1v1h-1z M800,148h1v1h-1z M801,149h1v3h-1z M800,152h1v1h-1z M808,148h1v1h-1z M809,149h1v3h-1z M808,152h1v1h-1z M816,148h1v1h-1z M817,149h1v3h-1z M816,152h1v1h-1z M824,148h1v1h-1z M825,149h1v3h-1z M824,152h1v1h-1z M832,148h1v1h-1z M833,149h1v3h-1z M832,152h1v1h-1z M840,148h1v1h-1z M841,149h1v3h-1z M840,152h1v1h-1z M848,148h1v1h-1z M849,149h1v3h-1z M848,152h1v1h-1z M856,148h1v1h-1z M857,149h1v3h-1z M856,152h1v1h-1z M864,148h1v1h-1z M865,149h1v3h-1z M864,152h1v1h-1z M872,148h1v1h-1z M873,149h1v3h-1z M872,152h1v1h-1z M880,148h1v1h-1z M881,149h1v3h-1z M880,152h1v1h-1z M888,148h1v1h-1z M889,149h1v3h-1z M888,152h1v1h-1z M896,148h1v1h-1z M897,149h1v3h-1z M896,152h1v1h-1z M904,148h1v1h-1z M905,149h1v3h-1z M904,152h1v1h-1z M912,148h1v1h-1z M913,149h1v3h-1z M912,152h1v1h-1z M920,148h1v1h-1z M921,149h1v3h-1z M920,152h1v1h-1z M928,148h1v1h-1z M929,149h1v3h-1z M928,152h1v1h-1z M936,148h1v1h-1z M937,149h1v3h-1z M936,152h1v1h-1z M944,148h1v1h-1z M945,149h1v3h-1z M944,152h1v1h-1z" fill="#1a6fb5"/>
<path d="M159,147h1v1h-1z M159,153h1v1h-1z M167,147h1v1h-1z M167,153h1v1h-1z M175,147h1v1h-1z M175,153h1v1h-1z M183,147h1v1h-1z M183,153h1v1h-1z M191,147h1v1h-1z M191,153h1v1h-1z M199,147h1v1h-1z M199,153h1v1h-1z M207,147h1v1h-1z M207,153h1v1h-1z M215,147h1v1h-1z M215,153h1v1h-1z M223,147h1v1h-1z M223,153h1v1h-1z M231,147h1v1h-1z M231,153h1v1h-1z M239,147h1v1h-1z M239,153h1v1h-1z M247,147h1v1h-1z M247,153h1v1h-1z M255,147h1v1h-1z M255,153h1v1h-1z M263,147h1v1h-1z M263,153h1v1h-1z M271,147h1v1h-1z M271,153h1v1h-1z M279,147h1v1h-1z M279,153h1v1h-1z M287,147h1v1h-1z M287,153h1v1h-1z M295,147h1v1h-1z M295,153h1v1h-1z M303,147h1v1h-1z M303,153h1v1h-1z M311,147h1v1h-1z M311,153h1v1h-1z M319,147h1v1h-1z M319,153h1v1h-1z M327,147h1v1h-1z M327,153h1v1h-1z M335,147h1v1h-1z M335,153h1v1h-1z M343,147h1v1h-1z M343,153h1v1h-1z M351,147h1v1h-1z M351,153h1v1h-1z M359,147h1v1h-1z M359,153h1v1h-1z M367,147h1v1h-1z M367,153h1v1h-1z M375,147h1v1h-1z M375,153h1v1h-1z M383,147h1v1h-1z M383,153h1v1h-1z M391,147h1v1h-1z M391,153h1v1h-1z M399,147h1v1h-1z M399,153h1v1h-1z M407,147h1v1h-1z M407,153h1v1h-1z M415,147h1v1h-1z M415,153h1v1h-1z M423,147h1v1h-1z M423,153h1v1h-1z M431,147h1v1h-1z M431,153h1v1h-1z M439,147h1v1h-1z M439,153h1v1h-1z M447,147h1v1h-1z M447,153h1v1h-1z M455,147h1v1h-1z M455,153h1v1h-1z M463,147h1v1h-1z M463,153h1v1h-1z M471,147h1v1h-1z M471,153h1v1h-1z M479,147h1v1h-1z M479,153h1v1h-1z M487,147h1v1h-1z M487,153h1v1h-1z M495,147h1v1h-1z M495,153h1v1h-1z M503,147h1v1h-1z M503,153h1v1h-1z M511,147h1v1h-1z M511,153h1v1h-1z M519,147h1v1h-1z M519,153h1v1h-1z M527,147h1v1h-1z M527,153h1v1h-1z M535,147h1v1h-1z M535,153h1v1h-1z M543,147h1v1h-1z M543,153h1v1h-1z M551,147h1v1h-1z M551,153h1v1h-1z M559,147h1v1h-1z M559,153h1v1h-1z M567,147h1v1h-1z M567,153h1v1h-1z M575,147h1v1h-1z M575,153h1v1h-1z M583,147h1v1h-1z M583,153h1v1h-1z M591,147h1v1h-1z M591,153h1v1h-1z M599,147h1v1h-1z M599,153h1v1h-1z M607,147h1v1h-1z M607,153h1v1h-1z M615,147h1v1h-1z M615,153h1v1h-1z M623,147h1v1h-1z M623,153h1v1h-1z M631,147h1v1h-1z M631,153h1v1h-1z M639,147h1v1h-1z M639,153h1v1h-1z M647,147h1v1h-1z M647,153h1v1h-1z M655,147h1v1h-1z M655,153h1v1h-1z M663,147h1v1h-1z M663,153h1v1h-1z M671,147h1v1h-1z M671,153h1v1h-1z M679,147h1v1h-1z M679,153h1v1h-1z M687,147h1v1h-1z M687,153h1v1h-1z M695,147h1v1h-1z M695,153h1v1h-1z M703,147h1v1h-1z M703,153h1v1h-1z M711,147h1v1h-1z M711,153h1v1h-1z M719,147h1v1h-1z M719,153h1v1h-1z M727,147h1v1h-1z M727,153h1v1h-1z M735,147h1v1h-1z M735,153h1v1h-1z M743,147h1v1h-1z M743,153h1v1h-1z M751,147h1v1h-1z M751,153h1v1h-1z M759,147h1v1h-1z M759,153h1v1h-1z M767,147h1v1h-1z M767,153h1v1h-1z M775,147h1v1h-1z M775,153h1v1h-1z M783,147h1v1h-1z M783,153h1v1h-1z M791,147h1v1h-1z M791,153h1v1h-1z M799,147h1v1h-1z M799,153h1v1h-1z M807,147h1v1h-1z M807,153h1v1h-1z M815,147h1v1h-1z M815,153h1v1h-1z M823,147h1v1h-1z M823,153h1v1h-1z M831,147h1v1h-1z M831,153h1v1h-1z M839,147h1v1h-1z M839,153h1v1h-1z M847,147h1v1h-1z M847,153h1v1h-1z M855,147h1v1h-1z M855,153h1v1h-1z M863,147h1v1h-1z M863,153h1v1h-1z M871,147h1v1h-1z M871,153h1v1h-1z M879,147h1v1h-1z M879,153h1v1h-1z M887,147h1v1h-1z M887,153h1v1h-1z M895,147h1v1h-1z M895,153h1v1h-1z M903,147h1v1h-1z M903,153h1v1h-1z M911,147h1v1h-1z M911,153h1v1h-1z M919,147h1v1h-1z M919,153h1v1h-1z M927,147h1v1h-1z M927,153h1v1h-1z M935,147h1v1h-1z M935,153h1v1h-1z M943,147h1v1h-1z M943,153h1v1h-1z" fill="#98bede"/>
<rect x="157" y="166" width="792" height="1" fill="#0c0c78"/>
<path d="M160,164h1v1h-1z M161,165h1v3h-1z M160,168h1v1h-1z M168,164h1v1h-1z M169,165h1v3h-1z M168,168h1v1h-1z M176,164h1v1h-1z M177,165h1v3h-1z M176,168h1v1h-1z M184,164h1v1h-1z M185,165h1v3h-1z M184,168h1v1h-1z M192,164h1v1h-1z M193,165h1v3h-1z M192,168h1v1h-1z M200,164h1v1h-1z M201,165h1v3h-1z M200,168h1v1h-1z M208,164h1v1h-1z M209,165h1v3h-1z M208,168h1v1h-1z M216,164h1v1h-1z M217,165h1v3h-1z M216,168h1v1h-1z M224,164h1v1h-1z M225,165h1v3h-1z M224,168h1v1h-1z M232,164h1v1h-1z M233,165h1v3h-1z M232,168h1v1h-1z M240,164h1v1h-1z M241,165h1v3h-1z M240,168h1v1h-1z M248,164h1v1h-1z M249,165h1v3h-1z M248,168h1v1h-1z M256,164h1v1h-1z M257,165h1v3h-1z M256,168h1v1h-1z M264,164h1v1h-1z M265,165h1v3h-1z M264,168h1v1h-1z M272,164h1v1h-1z M273,165h1v3h-1z M272,168h1v1h-1z M280,164h1v1h-1z M281,165h1v3h-1z M280,168h1v1h-1z M288,164h1v1h-1z M289,165h1v3h-1z M288,168h1v1h-1z M296,164h1v1h-1z M297,165h1v3h-1z M296,168h1v1h-1z M304,164h1v1h-1z M305,165h1v3h-1z M304,168h1v1h-1z M312,164h1v1h-1z M313,165h1v3h-1z M312,168h1v1h-1z M320,164h1v1h-1z M321,165h1v3h-1z M320,168h1v1h-1z M328,164h1v1h-1z M329,165h1v3h-1z M328,168h1v1h-1z M336,164h1v1h-1z M337,165h1v3h-1z M336,168h1v1h-1z M344,164h1v1h-1z M345,165h1v3h-1z M344,168h1v1h-1z M352,164h1v1h-1z M353,165h1v3h-1z M352,168h1v1h-1z M360,164h1v1h-1z M361,165h1v3h-1z M360,168h1v1h-1z M368,164h1v1h-1z M369,165h1v3h-1z M368,168h1v1h-1z M376,164h1v1h-1z M377,165h1v3h-1z M376,168h1v1h-1z M384,164h1v1h-1z M385,165h1v3h-1z M384,168h1v1h-1z M392,164h1v1h-1z M393,165h1v3h-1z M392,168h1v1h-1z M400,164h1v1h-1z M401,165h1v3h-1z M400,168h1v1h-1z M408,164h1v1h-1z M409,165h1v3h-1z M408,168h1v1h-1z M416,164h1v1h-1z M417,165h1v3h-1z M416,168h1v1h-1z M424,164h1v1h-1z M425,165h1v3h-1z M424,168h1v1h-1z M432,164h1v1h-1z M433,165h1v3h-1z M432,168h1v1h-1z M440,164h1v1h-1z M441,165h1v3h-1z M440,168h1v1h-1z M448,164h1v1h-1z M449,165h1v3h-1z M448,168h1v1h-1z M456,164h1v1h-1z M457,165h1v3h-1z M456,168h1v1h-1z M464,164h1v1h-1z M465,165h1v3h-1z M464,168h1v1h-1z M472,164h1v1h-1z M473,165h1v3h-1z M472,168h1v1h-1z M480,164h1v1h-1z M481,165h1v3h-1z M480,168h1v1h-1z M488,164h1v1h-1z M489,165h1v3h-1z M488,168h1v1h-1z M496,164h1v1h-1z M497,165h1v3h-1z M496,168h1v1h-1z M504,164h1v1h-1z M505,165h1v3h-1z M504,168h1v1h-1z M512,164h1v1h-1z M513,165h1v3h-1z M512,168h1v1h-1z M520,164h1v1h-1z M521,165h1v3h-1z M520,168h1v1h-1z M528,164h1v1h-1z M529,165h1v3h-1z M528,168h1v1h-1z M536,164h1v1h-1z M537,165h1v3h-1z M536,168h1v1h-1z M544,164h1v1h-1z M545,165h1v3h-1z M544,168h1v1h-1z M552,164h1v1h-1z M553,165h1v3h-1z M552,168h1v1h-1z M560,164h1v1h-1z M561,165h1v3h-1z M560,168h1v1h-1z M568,164h1v1h-1z M569,165h1v3h-1z M568,168h1v1h-1z M576,164h1v1h-1z M577,165h1v3h-1z M576,168h1v1h-1z M584,164h1v1h-1z M585,165h1v3h-1z M584,168h1v1h-1z M592,164h1v1h-1z M593,165h1v3h-1z M592,168h1v1h-1z M600,164h1v1h-1z M601,165h1v3h-1z M600,168h1v1h-1z M608,164h1v1h-1z M609,165h1v3h-1z M608,168h1v1h-1z M616,164h1v1h-1z M617,165h1v3h-1z M616,168h1v1h-1z M624,164h1v1h-1z M625,165h1v3h-1z M624,168h1v1h-1z M632,164h1v1h-1z M633,165h1v3h-1z M632,168h1v1h-1z M640,164h1v1h-1z M641,165h1v3h-1z M640,168h1v1h-1z M648,164h1v1h-1z M649,165h1v3h-1z M648,168h1v1h-1z M656,164h1v1h-1z M657,165h1v3h-1z M656,168h1v1h-1z M664,164h1v1h-1z M665,165h1v3h-1z M664,168h1v1h-1z M672,164h1v1h-1z M673,165h1v3h-1z M672,168h1v1h-1z M680,164h1v1h-1z M681,165h1v3h-1z M680,168h1v1h-1z M688,164h1v1h-1z M689,165h1v3h-1z M688,168h1v1h-1z M696,164h1v1h-1z M697,165h1v3h-1z M696,168h1v1h-1z M704,164h1v1h-1z M705,165h1v3h-1z M704,168h1v1h-1z M712,164h1v1h-1z M713,165h1v3h-1z M712,168h1v1h-1z M720,164h1v1h-1z M721,165h1v3h-1z M720,168h1v1h-1z M728,164h1v1h-1z M729,165h1v3h-1z M728,168h1v1h-1z M736,164h1v1h-1z M737,165h1v3h-1z M736,168h1v1h-1z M744,164h1v1h-1z M745,165h1v3h-1z M744,168h1v1h-1z M752,164h1v1h-1z M753,165h1v3h-1z M752,168h1v1h-1z M760,164h1v1h-1z M761,165h1v3h-1z M760,168h1v1h-1z M768,164h1v1h-1z M769,165h1v3h-1z M768,168h1v1h-1z M776,164h1v1h-1z M777,165h1v3h-1z M776,168h1v1h-1z M784,164h1v1h-1z M785,165h1v3h-1z M784,168h1v1h-1z M792,164h1v1h-1z M793,165h1v3h-1z M792,168h1v1h-1z M800,164h1v1h-1z M801,165h1v3h-1z M800,168h1v1h-1z M808,164h1v1h-1z M809,165h1v3h-1z M808,168h1v1h-1z M816,164h1v1h-1z M817,165h1v3h-1z M816,168h1v1h-1z M824,164h1v1h-1z M825,165h1v3h-1z M824,168h1v1h-1z M832,164h1v1h-1z M833,165h1v3h-1z M832,168h1v1h-1z M840,164h1v1h-1z M841,165h1v3h-1z M840,168h1v1h-1z M848,164h1v1h-1z M849,165h1v3h-1z M848,168h1v1h-1z M856,164h1v1h-1z M857,165h1v3h-1z M856,168h1v1h-1z M864,164h1v1h-1z M865,165h1v3h-1z M864,168h1v1h-1z M872,164h1v1h-1z M873,165h1v3h-1z M872,168h1v1h-1z M880,164h1v1h-1z M881,165h1v3h-1z M880,168h1v1h-1z M888,164h1v1h-1z M889,165h1v3h-1z M888,168h1v1h-1z M896,164h1v1h-1z M897,165h1v3h-1z M896,168h1v1h-1z M904,164h1v1h-1z M905,165h1v3h-1z M904,168h1v1h-1z M912,164h1v1h-1z M913,165h1v3h-1z M912,168h1v1h-1z M920,164h1v1h-1z M921,165h1v3h-1z M920,168h1v1h-1z M928,164h1v1h-1z M929,165h1v3h-1z M928,168h1v1h-1z M936,164h1v1h-1z M937,165h1v3h-1z M936,168h1v1h-1z M944,164h1v1h-1z M945,165h1v3h-1z M944,168h1v1h-1z" fill="#0c0c78"/>
<path d="M159,163h1v1h-1z M159,169h1v1h-1z M167,163h1v1h-1z M167,169h1v1h-1z M175,163h1v1h-1z M175,169h1v1h-1z M183,163h1v1h-1z M183,169h1v1h-1z M191,163h1v1h-1z M191,169h1v1h-1z M199,163h1v1h-1z M199,169h1v1h-1z M207,163h1v1h-1z M207,169h1v1h-1z M215,163h1v1h-1z M215,169h1v1h-1z M223,163h1v1h-1z M223,169h1v1h-1z M231,163h1v1h-1z M231,169h1v1h-1z M239,163h1v1h-1z M239,169h1v1h-1z M247,163h1v1h-1z M247,169h1v1h-1z M255,163h1v1h-1z M255,169h1v1h-1z M263,163h1v1h-1z M263,169h1v1h-1z M271,163h1v1h-1z M271,169h1v1h-1z M279,163h1v1h-1z M279,169h1v1h-1z M287,163h1v1h-1z M287,169h1v1h-1z M295,163h1v1h-1z M295,169h1v1h-1z M303,163h1v1h-1z M303,169h1v1h-1z M311,163h1v1h-1z M311,169h1v1h-1z M319,163h1v1h-1z M319,169h1v1h-1z M327,163h1v1h-1z M327,169h1v1h-1z M335,163h1v1h-1z M335,169h1v1h-1z M343,163h1v1h-1z M343,169h1v1h-1z M351,163h1v1h-1z M351,169h1v1h-1z M359,163h1v1h-1z M359,169h1v1h-1z M367,163h1v1h-1z M367,169h1v1h-1z M375,163h1v1h-1z M375,169h1v1h-1z M383,163h1v1h-1z M383,169h1v1h-1z M391,163h1v1h-1z M391,169h1v1h-1z M399,163h1v1h-1z M399,169h1v1h-1z M407,163h1v1h-1z M407,169h1v1h-1z M415,163h1v1h-1z M415,169h1v1h-1z M423,163h1v1h-1z M423,169h1v1h-1z M431,163h1v1h-1z M431,169h1v1h-1z M439,163h1v1h-1z M439,169h1v1h-1z M447,163h1v1h-1z M447,169h1v1h-1z M455,163h1v1h-1z M455,169h1v1h-1z M463,163h1v1h-1z M463,169h1v1h-1z M471,163h1v1h-1z M471,169h1v1h-1z M479,163h1v1h-1z M479,169h1v1h-1z M487,163h1v1h-1z M487,169h1v1h-1z M495,163h1v1h-1z M495,169h1v1h-1z M503,163h1v1h-1z M503,169h1v1h-1z M511,163h1v1h-1z M511,169h1v1h-1z M519,163h1v1h-1z M519,169h1v1h-1z M527,163h1v1h-1z M527,169h1v1h-1z M535,163h1v1h-1z M535,169h1v1h-1z M543,163h1v1h-1z M543,169h1v1h-1z M551,163h1v1h-1z M551,169h1v1h-1z M559,163h1v1h-1z M559,169h1v1h-1z M567,163h1v1h-1z M567,169h1v1h-1z M575,163h1v1h-1z M575,169h1v1h-1z M583,163h1v1h-1z M583,169h1v1h-1z M591,163h1v1h-1z M591,169h1v1h-1z M599,163h1v1h-1z M599,169h1v1h-1z M607,163h1v1h-1z M607,169h1v1h-1z M615,163h1v1h-1z M615,169h1v1h-1z M623,163h1v1h-1z M623,169h1v1h-1z M631,163h1v1h-1z M631,169h1v1h-1z M639,163h1v1h-1z M639,169h1v1h-1z M647,163h1v1h-1z M647,169h1v1h-1z M655,163h1v1h-1z M655,169h1v1h-1z M663,163h1v1h-1z M663,169h1v1h-1z M671,163h1v1h-1z M671,169h1v1h-1z M679,163h1v1h-1z M679,169h1v1h-1z M687,163h1v1h-1z M687,169h1v1h-1z M695,163h1v1h-1z M695,169h1v1h-1z M703,163h1v1h-1z M703,169h1v1h-1z M711,163h1v1h-1z M711,169h1v1h-1z M719,163h1v1h-1z M719,169h1v1h-1z M727,163h1v1h-1z M727,169h1v1h-1z M735,163h1v1h-1z M735,169h1v1h-1z M743,163h1v1h-1z M743,169h1v1h-1z M751,163h1v1h-1z M751,169h1v1h-1z M759,163h1v1h-1z M759,169h1v1h-1z M767,163h1v1h-1z M767,169h1v1h-1z M775,163h1v1h-1z M775,169h1v1h-1z M783,163h1v1h-1z M783,169h1v1h-1z M791,163h1v1h-1z M791,169h1v1h-1z M799,163h1v1h-1z M799,169h1v1h-1z M807,163h1v1h-1z M807,169h1v1h-1z M815,163h1v1h-1z M815,169h1v1h-1z M823,163h1v1h-1z M823,169h1v1h-1z M831,163h1v1h-1z M831,169h1v1h-1z M839,163h1v1h-1z M839,169h1v1h-1z M847,163h1v1h-1z M847,169h1v1h-1z M855,163h1v1h-1z M855,169h1v1h-1z M863,163h1v1h-1z M863,169h1v1h-1z M871,163h1v1h-1z M871,169h1v1h-1z M879,163h1v1h-1z M879,169h1v1h-1z M887,163h1v1h-1z M887,169h1v1h-1z M895,163h1v1h-1z M895,169h1v1h-1z M903,163h1v1h-1z M903,169h1v1h-1z M911,163h1v1h-1z M911,169h1v1h-1z M919,163h1v1h-1z M919,169h1v1h-1z M927,163h1v1h-1z M927,169h1v1h-1z M935,163h1v1h-1z M935,169h1v1h-1z M943,163h1v1h-1z M943,169h1v1h-1z" fill="#9292c2"/>
<text x="491.35" y="187" font-size="11" fill="#000" text-anchor="start" textLength="122.71" lengthAdjust="spacing">RefSeq genes from NCBI</text>
<rect x="157" y="197" width="792" height="1" fill="#0c0c78"/>
<text x="445.06" y="218" font-size="11" fill="#000" text-anchor="start" textLength="214.48" lengthAdjust="spacing">Publications: Sequences in Scientific Articles</text>
<text x="367.75" y="266" font-size="13" fill="#005c00" text-anchor="start" textLength="369.9" lengthAdjust="spacing">OMIM Gene Phenotypes - Dark Green Can Be Disease-causing</text>
<rect x="156" y="268" width="793" height="15" fill="#bebebe"/>
<text x="435.61" y="296" font-size="11" fill="#000" text-anchor="start" textLength="232.17" lengthAdjust="spacing">Short Genetic Variants from dbSNP release 155</text>
<rect x="503" y="299" width="446" height="15" fill="#aaaaaa"/>
<rect x="156" y="302" width="793" height="9" fill="#000"/>
<text x="265.97" y="328" font-size="13" fill="#000" text-anchor="start" textLength="572.36" lengthAdjust="spacing">Gene Expression in 54 tissues from GTEx RNA-seq of 17382 samples, 948 donors (V8, Aug 2019)</text>
<rect x="156" y="331" width="378" height="57" fill="#eeeeee"/>
<rect x="157" y="332" width="376" height="55" fill="#ffffff"/>
<rect x="156" y="346" width="5" height="41" fill="#FFA54F"/>
<rect x="163" y="345" width="5" height="42" fill="#EE9A00"/>
<rect x="170" y="355" width="5" height="32" fill="#8FBC8F"/>
<rect x="177" y="341" width="5" height="46" fill="#8B1C62"/>
<rect x="184" y="342" width="5" height="45" fill="#EE6A50"/>
<rect x="191" y="338" width="5" height="49" fill="#FF0000"/>
<rect x="198" y="341" width="5" height="46" fill="#CDB79E"/>
<rect x="205" y="344" width="5" height="43" fill="#EEEE00"/>
<rect x="212" y="343" width="5" height="44" fill="#EEEE00"/>
<rect x="219" y="346" width="5" height="41" fill="#EEEE00"/>
<rect x="226" y="334" width="5" height="53" fill="#EEEE00"/>
<rect x="233" y="333" width="5" height="54" fill="#EEEE00"/>
<rect x="240" y="342" width="5" height="45" fill="#EEEE00"/>
<rect x="247" y="343" width="5" height="44" fill="#EEEE00"/>
<rect x="254" y="342" width="5" height="45" fill="#EEEE00"/>
<rect x="261" y="343" width="5" height="44" fill="#EEEE00"/>
<rect x="268" y="348" width="5" height="39" fill="#EEEE00"/>
<rect x="275" y="346" width="5" height="41" fill="#EEEE00"/>
<rect x="282" y="331" width="5" height="56" fill="#EEEE00"/>
<rect x="289" y="341" width="5" height="46" fill="#EEEE00"/>
<rect x="296" y="347" width="5" height="40" fill="#00CDCD"/>
<rect x="303" y="378" width="5" height="9" fill="#EE82EE"/>
<rect x="310" y="341" width="5" height="46" fill="#9AC0CD"/>
<rect x="317" y="342" width="5" height="45" fill="#EED5D2"/>
<rect x="324" y="341" width="5" height="46" fill="#EED5D2"/>
<rect x="331" y="344" width="5" height="43" fill="#CDB79E"/>
<rect x="338" y="354" width="5" height="33" fill="#EEC591"/>
<rect x="345" y="343" width="5" height="44" fill="#8B7355"/>
<rect x="352" y="336" width="5" height="51" fill="#8B7355"/>
<rect x="359" y="342" width="5" height="45" fill="#CDAA7D"/>
<rect x="366" y="345" width="5" height="42" fill="#EED5D2"/>
<rect x="373" y="351" width="5" height="36" fill="#B452CD"/>
<rect x="380" y="355" width="5" height="32" fill="#7A378B"/>
<rect x="387" y="360" width="5" height="27" fill="#CDB79E"/>
<rect x="394" y="358" width="5" height="29" fill="#CDB79E"/>
<rect x="401" y="378" width="5" height="9" fill="#CDB79E"/>
<rect x="408" y="342" width="5" height="45" fill="#9ACD32"/>
<rect x="415" y="357" width="5" height="30" fill="#CDB79E"/>
<rect x="422" y="364" width="5" height="23" fill="#7A67EE"/>
<rect x="429" y="338" width="5" height="49" fill="#FFD700"/>
<rect x="436" y="346" width="5" height="41" fill="#FFB6C1"/>
<rect x="443" y="376" width="5" height="11" fill="#CD9B1D"/>
<rect x="450" y="363" width="5" height="24" fill="#B4EEB4"/>
<rect x="457" y="345" width="5" height="42" fill="#D9D9D9"/>
<rect x="464" y="334" width="5" height="53" fill="#3A5FCD"/>
<rect x="471" y="333" width="5" height="54" fill="#1E90FF"/>
<rect x="478" y="358" width="5" height="29" fill="#CDB79E"/>
<rect x="485" y="341" width="5" height="46" fill="#CDB79E"/>
<rect x="492" y="362" width="5" height="25" fill="#FFD39B"/>
<rect x="499" y="344" width="5" height="43" fill="#A6A6A6"/>
<rect x="506" y="353" width="5" height="34" fill="#008B45"/>
<rect x="513" y="340" width="5" height="47" fill="#EED5D2"/>
<rect x="520" y="340" width="5" height="47" fill="#EED5D2"/>
<rect x="527" y="385" width="5" height="2" fill="#FF00FF"/>
<rect x="156" y="388" width="793" height="2" fill="#000080"/>
<text x="280.52" y="405" font-size="13" fill="#000" text-anchor="start" textLength="541.86" lengthAdjust="spacing">H3K27Ac Mark (Often Found Near Active Regulatory Elements) on 7 cell lines from ENCODE</text>
<rect x="156" y="434" width="198" height="1" fill="#c88cf0"/>
<rect x="156" y="435" width="198" height="1" fill="#5a3cd6"/>
<rect x="156" y="436" width="198" height="1" fill="#1c1060"/>
<rect x="354" y="435" width="595" height="1" fill="#d848d0"/>
<rect x="354" y="436" width="595" height="1" fill="#50106a"/>
<text x="405.93" y="451" font-size="13" fill="#3c3c8c" text-anchor="start" textLength="292.54" lengthAdjust="spacing">100 vertebrates Basewise Conservation by PhyloP</text>
<rect x="158" y="478" width="14" height="1" fill="#dcf6dc"/>
<rect x="180" y="478" width="14" height="1" fill="#dcf6dc"/>
<rect x="173" y="478" width="6" height="1" fill="#00f000"/>
<rect x="207" y="478" width="14" height="1" fill="#dcf6dc"/>
<rect x="229" y="478" width="14" height="1" fill="#dcf6dc"/>
<rect x="222" y="478" width="6" height="1" fill="#00f000"/>
<rect x="257" y="478" width="14" height="1" fill="#dcf6dc"/>
<rect x="279" y="478" width="14" height="1" fill="#dcf6dc"/>
<rect x="272" y="478" width="6" height="1" fill="#00f000"/>
<rect x="306" y="478" width="14" height="1" fill="#dcf6dc"/>
<rect x="328" y="478" width="14" height="1" fill="#dcf6dc"/>
<rect x="321" y="478" width="6" height="1" fill="#00f000"/>
<rect x="356" y="478" width="14" height="1" fill="#dcf6dc"/>
<rect x="378" y="478" width="14" height="1" fill="#dcf6dc"/>
<rect x="371" y="478" width="6" height="1" fill="#00f000"/>
<rect x="504" y="475" width="36" height="1" fill="#84ee84"/>
<rect x="519" y="475" width="6" height="4" fill="#00f000"/>
<rect x="554" y="479" width="36" height="1" fill="#84ee84"/>
<rect x="569" y="479" width="6" height="5" fill="#00f000"/>
<rect x="604" y="475" width="36" height="1" fill="#84ee84"/>
<rect x="619" y="475" width="6" height="4" fill="#00f000"/>
<rect x="653" y="479" width="36" height="1" fill="#70ec70"/>
<rect x="668" y="479" width="6" height="7" fill="#00f000"/>
<rect x="802" y="475" width="36" height="1" fill="#84ee84"/>
<rect x="817" y="475" width="6" height="4" fill="#00f000"/>
<rect x="851" y="479" width="36" height="1" fill="#a8f2a8"/>
<rect x="866" y="479" width="6" height="3" fill="#00f000"/>
<rect x="901" y="479" width="14" height="1" fill="#e0f8e0"/>
<rect x="923" y="479" width="14" height="1" fill="#e0f8e0"/>
<rect x="916" y="479" width="6" height="1" fill="#00f000"/>
<rect x="556" y="484" width="39" height="1" fill="#ece8c8"/>
<rect x="557" y="484" width="7" height="1" fill="#cfc468"/>
<rect x="559" y="484" width="4" height="1" fill="#b8a834"/>
<rect x="586" y="484" width="7" height="1" fill="#cfc468"/>
<rect x="587" y="484" width="4" height="1" fill="#b8a834"/>
<rect x="654" y="486" width="38" height="1" fill="#ffd0d0"/>
<rect x="657" y="486" width="32" height="1" fill="#ffa4a4"/>
<rect x="663" y="486" width="6" height="1" fill="#ff8484"/>
<rect x="675" y="486" width="8" height="1" fill="#ff8484"/>
<text x="444.98" y="517" font-size="13" fill="#0c0c78" text-anchor="start" textLength="214.64" lengthAdjust="spacing">Multiz Alignments of 100 Vertebrates</text>
<text x="179.00" y="546" font-size="14" fill="#0c0c78" text-anchor="middle">T</text>
<rect x="177" y="557" width="4" height="1" fill="#7878b0"/>
<rect x="176" y="571" width="6" height="1" fill="#7878b0"/>
<rect x="176" y="574" width="6" height="1" fill="#7878b0"/>
<rect x="176" y="586" width="6" height="1" fill="#7878b0"/>
<rect x="176" y="589" width="6" height="1" fill="#7878b0"/>
<rect x="176" y="601" width="6" height="1" fill="#7878b0"/>
<rect x="176" y="604" width="6" height="1" fill="#7878b0"/>
<rect x="177" y="617" width="4" height="1" fill="#7878b0"/>
<rect x="176" y="631" width="6" height="1" fill="#7878b0"/>
<rect x="176" y="634" width="6" height="1" fill="#7878b0"/>
<rect x="176" y="646" width="6" height="1" fill="#7878b0"/>
<rect x="176" y="649" width="6" height="1" fill="#7878b0"/>
<text x="228.00" y="546" font-size="14" fill="#0c0c78" text-anchor="middle">T</text>
<rect x="226" y="557" width="4" height="1" fill="#7878b0"/>
<rect x="225" y="571" width="6" height="1" fill="#7878b0"/>
<rect x="225" y="574" width="6" height="1" fill="#7878b0"/>
<rect x="225" y="586" width="6" height="1" fill="#7878b0"/>
<rect x="225" y="589" width="6" height="1" fill="#7878b0"/>
<rect x="225" y="601" width="6" height="1" fill="#7878b0"/>
<rect x="225" y="604" width="6" height="1" fill="#7878b0"/>
<rect x="226" y="617" width="4" height="1" fill="#7878b0"/>
<rect x="225" y="631" width="6" height="1" fill="#7878b0"/>
<rect x="225" y="634" width="6" height="1" fill="#7878b0"/>
<rect x="225" y="646" width="6" height="1" fill="#7878b0"/>
<rect x="225" y="649" width="6" height="1" fill="#7878b0"/>
<text x="278.00" y="546" font-size="14" fill="#0c0c78" text-anchor="middle">T</text>
<rect x="276" y="557" width="4" height="1" fill="#7878b0"/>
<rect x="275" y="571" width="6" height="1" fill="#7878b0"/>
<rect x="275" y="574" width="6" height="1" fill="#7878b0"/>
<rect x="275" y="586" width="6" height="1" fill="#7878b0"/>
<rect x="275" y="589" width="6" height="1" fill="#7878b0"/>
<rect x="275" y="601" width="6" height="1" fill="#7878b0"/>
<rect x="275" y="604" width="6" height="1" fill="#7878b0"/>
<rect x="276" y="617" width="4" height="1" fill="#7878b0"/>
<rect x="275" y="631" width="6" height="1" fill="#7878b0"/>
<rect x="275" y="634" width="6" height="1" fill="#7878b0"/>
<rect x="275" y="646" width="6" height="1" fill="#7878b0"/>
<rect x="275" y="649" width="6" height="1" fill="#7878b0"/>
<text x="327.00" y="546" font-size="14" fill="#0c0c78" text-anchor="middle">T</text>
<rect x="325" y="557" width="4" height="1" fill="#7878b0"/>
<rect x="324" y="571" width="6" height="1" fill="#7878b0"/>
<rect x="324" y="574" width="6" height="1" fill="#7878b0"/>
<rect x="324" y="586" width="6" height="1" fill="#7878b0"/>
<rect x="324" y="589" width="6" height="1" fill="#7878b0"/>
<rect x="324" y="601" width="6" height="1" fill="#7878b0"/>
<rect x="324" y="604" width="6" height="1" fill="#7878b0"/>
<rect x="325" y="617" width="4" height="1" fill="#7878b0"/>
<rect x="324" y="631" width="6" height="1" fill="#7878b0"/>
<rect x="324" y="634" width="6" height="1" fill="#7878b0"/>
<rect x="324" y="646" width="6" height="1" fill="#7878b0"/>
<rect x="324" y="649" width="6" height="1" fill="#7878b0"/>
<text x="377.00" y="546" font-size="14" fill="#0c0c78" text-anchor="middle">T</text>
<text x="377.00" y="561" font-size="14" fill="#0c0c78" text-anchor="middle">T</text>
<rect x="374" y="571" width="6" height="1" fill="#7878b0"/>
<rect x="374" y="574" width="6" height="1" fill="#7878b0"/>
<rect x="374" y="586" width="6" height="1" fill="#7878b0"/>
<rect x="374" y="589" width="6" height="1" fill="#7878b0"/>
<rect x="374" y="601" width="6" height="1" fill="#7878b0"/>
<rect x="374" y="604" width="6" height="1" fill="#7878b0"/>
<rect x="375" y="617" width="4" height="1" fill="#7878b0"/>
<rect x="374" y="631" width="6" height="1" fill="#7878b0"/>
<rect x="374" y="634" width="6" height="1" fill="#7878b0"/>
<rect x="374" y="646" width="6" height="1" fill="#7878b0"/>
<rect x="374" y="649" width="6" height="1" fill="#7878b0"/>
<text x="426.00" y="546" font-size="14" fill="#0c0c78" text-anchor="middle">T</text>
<text x="426.00" y="561" font-size="14" fill="#0c0c78" text-anchor="middle">T</text>
<rect x="423" y="571" width="6" height="1" fill="#7878b0"/>
<rect x="423" y="574" width="6" height="1" fill="#7878b0"/>
<rect x="423" y="586" width="6" height="1" fill="#7878b0"/>
<rect x="423" y="589" width="6" height="1" fill="#7878b0"/>
<rect x="423" y="601" width="6" height="1" fill="#7878b0"/>
<rect x="423" y="604" width="6" height="1" fill="#7878b0"/>
<rect x="424" y="617" width="4" height="1" fill="#7878b0"/>
<rect x="423" y="631" width="6" height="1" fill="#7878b0"/>
<rect x="423" y="634" width="6" height="1" fill="#7878b0"/>
<rect x="423" y="646" width="6" height="1" fill="#7878b0"/>
<rect x="423" y="649" width="6" height="1" fill="#7878b0"/>
<text x="476.00" y="546" font-size="14" fill="#0c0c78" text-anchor="middle">T</text>
<text x="476.00" y="561" font-size="14" fill="#0c0c78" text-anchor="middle">T</text>
<rect x="473" y="571" width="6" height="1" fill="#7878b0"/>
<rect x="473" y="574" width="6" height="1" fill="#7878b0"/>
<rect x="473" y="586" width="6" height="1" fill="#7878b0"/>
<rect x="473" y="589" width="6" height="1" fill="#7878b0"/>
<rect x="473" y="601" width="6" height="1" fill="#7878b0"/>
<rect x="473" y="604" width="6" height="1" fill="#7878b0"/>
<rect x="474" y="617" width="4" height="1" fill="#7878b0"/>
<rect x="473" y="631" width="6" height="1" fill="#7878b0"/>
<rect x="473" y="634" width="6" height="1" fill="#7878b0"/>
<rect x="473" y="646" width="6" height="1" fill="#7878b0"/>
<rect x="473" y="649" width="6" height="1" fill="#7878b0"/>
<text x="525.00" y="546" font-size="14" fill="#0c0c78" text-anchor="middle">T</text>
<text x="525.00" y="561" font-size="14" fill="#0c0c78" text-anchor="middle">T</text>
<rect x="522" y="571" width="6" height="1" fill="#7878b0"/>
<rect x="522" y="574" width="6" height="1" fill="#7878b0"/>
<rect x="522" y="586" width="6" height="1" fill="#7878b0"/>
<rect x="522" y="589" width="6" height="1" fill="#7878b0"/>
<rect x="522" y="601" width="6" height="1" fill="#7878b0"/>
<rect x="522" y="604" width="6" height="1" fill="#7878b0"/>
<rect x="523" y="617" width="4" height="1" fill="#7878b0"/>
<rect x="522" y="631" width="6" height="1" fill="#7878b0"/>
<rect x="522" y="634" width="6" height="1" fill="#7878b0"/>
<rect x="522" y="646" width="6" height="1" fill="#7878b0"/>
<rect x="522" y="649" width="6" height="1" fill="#7878b0"/>
<text x="575.00" y="546" font-size="14" fill="#0c0c78" text-anchor="middle">T</text>
<text x="575.00" y="561" font-size="14" fill="#0c0c78" text-anchor="middle">T</text>
<rect x="572" y="571" width="6" height="1" fill="#7878b0"/>
<rect x="572" y="574" width="6" height="1" fill="#7878b0"/>
<rect x="572" y="586" width="6" height="1" fill="#7878b0"/>
<rect x="572" y="589" width="6" height="1" fill="#7878b0"/>
<rect x="572" y="601" width="6" height="1" fill="#7878b0"/>
<rect x="572" y="604" width="6" height="1" fill="#7878b0"/>
<rect x="573" y="617" width="4" height="1" fill="#7878b0"/>
<rect x="572" y="631" width="6" height="1" fill="#7878b0"/>
<rect x="572" y="634" width="6" height="1" fill="#7878b0"/>
<rect x="572" y="646" width="6" height="1" fill="#7878b0"/>
<rect x="572" y="649" width="6" height="1" fill="#7878b0"/>
<text x="625.00" y="546" font-size="14" fill="#0c0c78" text-anchor="middle">T</text>
<text x="625.00" y="561" font-size="14" fill="#0c0c78" text-anchor="middle">T</text>
<rect x="622" y="571" width="6" height="1" fill="#7878b0"/>
<rect x="622" y="574" width="6" height="1" fill="#7878b0"/>
<rect x="622" y="586" width="6" height="1" fill="#7878b0"/>
<rect x="622" y="589" width="6" height="1" fill="#7878b0"/>
<rect x="622" y="601" width="6" height="1" fill="#7878b0"/>
<rect x="622" y="604" width="6" height="1" fill="#7878b0"/>
<rect x="623" y="617" width="4" height="1" fill="#7878b0"/>
<rect x="622" y="631" width="6" height="1" fill="#7878b0"/>
<rect x="622" y="634" width="6" height="1" fill="#7878b0"/>
<rect x="622" y="646" width="6" height="1" fill="#7878b0"/>
<rect x="622" y="649" width="6" height="1" fill="#7878b0"/>
<text x="674.00" y="546" font-size="14" fill="#0c0c78" text-anchor="middle">T</text>
<text x="674.00" y="561" font-size="14" fill="#0c0c78" text-anchor="middle">T</text>
<rect x="671" y="571" width="6" height="1" fill="#7878b0"/>
<rect x="671" y="574" width="6" height="1" fill="#7878b0"/>
<rect x="671" y="586" width="6" height="1" fill="#7878b0"/>
<rect x="671" y="589" width="6" height="1" fill="#7878b0"/>
<rect x="671" y="601" width="6" height="1" fill="#7878b0"/>
<rect x="671" y="604" width="6" height="1" fill="#7878b0"/>
<rect x="672" y="617" width="4" height="1" fill="#7878b0"/>
<rect x="671" y="631" width="6" height="1" fill="#7878b0"/>
<rect x="671" y="634" width="6" height="1" fill="#7878b0"/>
<rect x="671" y="646" width="6" height="1" fill="#7878b0"/>
<rect x="671" y="649" width="6" height="1" fill="#7878b0"/>
<text x="724.00" y="546" font-size="14" fill="#0c0c78" text-anchor="middle">T</text>
<text x="724.00" y="561" font-size="14" fill="#0c0c78" text-anchor="middle">T</text>
<rect x="721" y="571" width="6" height="1" fill="#7878b0"/>
<rect x="721" y="574" width="6" height="1" fill="#7878b0"/>
<rect x="721" y="586" width="6" height="1" fill="#7878b0"/>
<rect x="721" y="589" width="6" height="1" fill="#7878b0"/>
<rect x="721" y="601" width="6" height="1" fill="#7878b0"/>
<rect x="721" y="604" width="6" height="1" fill="#7878b0"/>
<rect x="722" y="617" width="4" height="1" fill="#7878b0"/>
<rect x="721" y="631" width="6" height="1" fill="#7878b0"/>
<rect x="721" y="634" width="6" height="1" fill="#7878b0"/>
<rect x="721" y="646" width="6" height="1" fill="#7878b0"/>
<rect x="721" y="649" width="6" height="1" fill="#7878b0"/>
<text x="773.00" y="546" font-size="14" fill="#0c0c78" text-anchor="middle">T</text>
<text x="773.00" y="561" font-size="14" fill="#0c0c78" text-anchor="middle">T</text>
<rect x="770" y="571" width="6" height="1" fill="#7878b0"/>
<rect x="770" y="574" width="6" height="1" fill="#7878b0"/>
<rect x="770" y="586" width="6" height="1" fill="#7878b0"/>
<rect x="770" y="589" width="6" height="1" fill="#7878b0"/>
<rect x="770" y="601" width="6" height="1" fill="#7878b0"/>
<rect x="770" y="604" width="6" height="1" fill="#7878b0"/>
<rect x="771" y="617" width="4" height="1" fill="#7878b0"/>
<rect x="770" y="631" width="6" height="1" fill="#7878b0"/>
<rect x="770" y="634" width="6" height="1" fill="#7878b0"/>
<rect x="770" y="646" width="6" height="1" fill="#7878b0"/>
<rect x="770" y="649" width="6" height="1" fill="#7878b0"/>
<text x="823.00" y="546" font-size="14" fill="#0c0c78" text-anchor="middle">T</text>
<text x="823.00" y="561" font-size="14" fill="#0c0c78" text-anchor="middle">T</text>
<rect x="820" y="571" width="6" height="1" fill="#7878b0"/>
<rect x="820" y="574" width="6" height="1" fill="#7878b0"/>
<rect x="820" y="586" width="6" height="1" fill="#7878b0"/>
<rect x="820" y="589" width="6" height="1" fill="#7878b0"/>
<rect x="820" y="601" width="6" height="1" fill="#7878b0"/>
<rect x="820" y="604" width="6" height="1" fill="#7878b0"/>
<rect x="821" y="617" width="4" height="1" fill="#7878b0"/>
<rect x="820" y="631" width="6" height="1" fill="#7878b0"/>
<rect x="820" y="634" width="6" height="1" fill="#7878b0"/>
<rect x="820" y="646" width="6" height="1" fill="#7878b0"/>
<rect x="820" y="649" width="6" height="1" fill="#7878b0"/>
<text x="872.00" y="546" font-size="14" fill="#0c0c78" text-anchor="middle">T</text>
<text x="872.00" y="561" font-size="14" fill="#0c0c78" text-anchor="middle">T</text>
<rect x="869" y="571" width="6" height="1" fill="#7878b0"/>
<rect x="869" y="574" width="6" height="1" fill="#7878b0"/>
<rect x="869" y="586" width="6" height="1" fill="#7878b0"/>
<rect x="869" y="589" width="6" height="1" fill="#7878b0"/>
<rect x="869" y="601" width="6" height="1" fill="#7878b0"/>
<rect x="869" y="604" width="6" height="1" fill="#7878b0"/>
<rect x="870" y="617" width="4" height="1" fill="#7878b0"/>
<rect x="869" y="631" width="6" height="1" fill="#7878b0"/>
<rect x="869" y="634" width="6" height="1" fill="#7878b0"/>
<rect x="869" y="646" width="6" height="1" fill="#7878b0"/>
<rect x="869" y="649" width="6" height="1" fill="#7878b0"/>
<text x="922.00" y="546" font-size="14" fill="#0c0c78" text-anchor="middle">T</text>
<text x="922.00" y="561" font-size="14" fill="#0c0c78" text-anchor="middle">T</text>
<rect x="919" y="571" width="6" height="1" fill="#7878b0"/>
<rect x="919" y="574" width="6" height="1" fill="#7878b0"/>
<rect x="919" y="586" width="6" height="1" fill="#7878b0"/>
<rect x="919" y="589" width="6" height="1" fill="#7878b0"/>
<rect x="919" y="601" width="6" height="1" fill="#7878b0"/>
<rect x="919" y="604" width="6" height="1" fill="#7878b0"/>
<rect x="920" y="617" width="4" height="1" fill="#7878b0"/>
<rect x="919" y="631" width="6" height="1" fill="#7878b0"/>
<rect x="919" y="634" width="6" height="1" fill="#7878b0"/>
<rect x="919" y="646" width="6" height="1" fill="#7878b0"/>
<rect x="919" y="649" width="6" height="1" fill="#7878b0"/>
<text x="441.57" y="667" font-size="13" fill="#000" text-anchor="start" textLength="221.76" lengthAdjust="spacing">Repeating Elements by RepeatMasker</text>
<rect x="156" y="669" width="793" height="15" fill="#000"/>
</svg></body></html>
